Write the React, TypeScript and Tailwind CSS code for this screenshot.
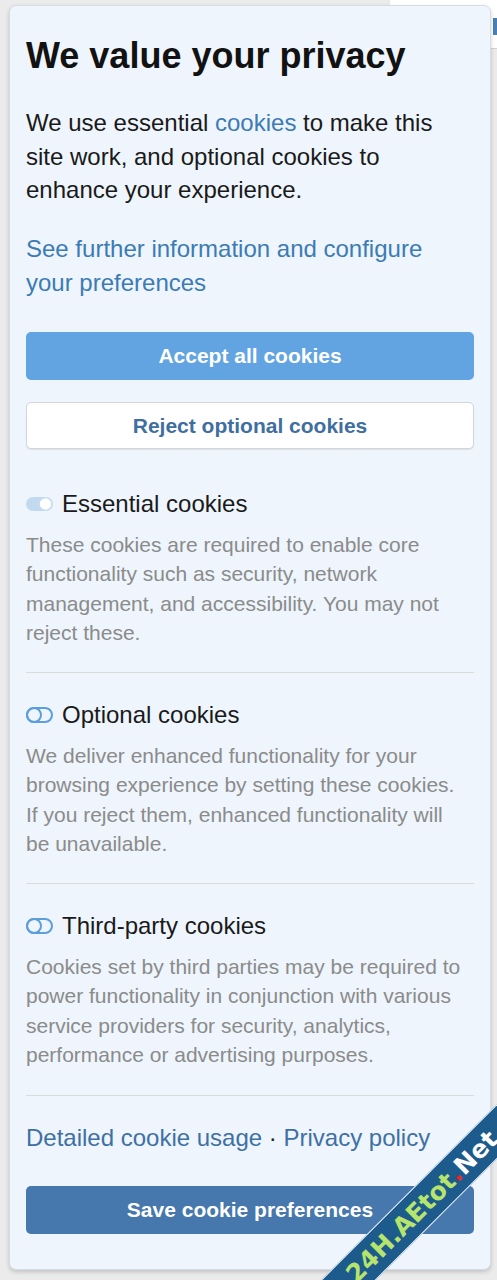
import React from "react";

function ToggleOn() {
  return (
    <svg width="27" height="16" viewBox="0 0 27 16" className="shrink-0">
      <rect x="0" y="1" width="27" height="14" rx="7" fill="#c2daf0" />
      <circle cx="19.5" cy="8" r="5.8" fill="#ffffff" />
    </svg>
  );
}

function ToggleOff() {
  return (
    <svg width="27" height="16" viewBox="0 0 27 16" className="shrink-0">
      <rect x="1" y="1" width="25" height="14" rx="7" fill="none" stroke="#5c9edb" strokeWidth="2" />
      <circle cx="8" cy="8" r="7" fill="none" stroke="#5c9edb" strokeWidth="2" />
    </svg>
  );
}

function Section({
  title,
  on,
  text,
  first,
}: {
  title: string;
  on: boolean;
  text: string;
  first?: boolean;
}) {
  return (
    <div
      className={
        first
          ? "mt-[38px] border-b border-[#d9dadb] pb-[25px]"
          : "border-b border-[#d9dadb] pt-[25px] pb-[25px]"
      }
    >
      <div className="flex items-center gap-[9px]">
        {on ? <ToggleOn /> : <ToggleOff />}
        <span className="text-[24px] leading-[1.4] text-[#1a1a1a]">{title}</span>
      </div>
      <p className="mt-[9px] max-w-[436px] text-[21px] leading-[1.4] text-[#8b8b8b]">{text}</p>
    </div>
  );
}

export default function App() {
  return (
    <div
      className="relative h-[1280px] w-full overflow-hidden bg-[#ebebeb]"
      style={{ fontFamily: '"Liberation Sans", Arial, Helvetica, sans-serif' }}
    >
      {/* background element behind panel, top right */}
      <div className="absolute left-[390px] top-0 h-[49px] w-[107px] border-b border-[#d2d2d2] bg-white">
        <div className="absolute right-0 top-[18px] h-[17px] w-[4px] bg-[#4a7fb5]" />
      </div>

      <div className="relative z-10 ml-[9px] mt-[5px] w-[482px] rounded-[7px] border border-[#d8dde3] bg-[#eef5fc] px-[16px] pt-[28px] pb-[35px] shadow-[0_2px_4px_rgba(0,0,0,0.18)]">
        <h1 className="text-[36px] font-bold leading-[1.2] text-[#121212]">We value your privacy</h1>
        <p className="mt-[29px] text-[24px] leading-[1.4] text-[#1a1a1a]">
          We use essential <span className="text-[#3c7bb5]">cookies</span> to make this site work, and
          optional cookies to enhance your experience.
        </p>
        <p className="mt-[25px] text-[24px] leading-[1.4] text-[#3c7bb5]">
          See further information and configure your preferences
        </p>
        <button className="mt-[33px] flex h-[48px] w-full items-center justify-center rounded-[5px] bg-[#62a4e1] text-[21px] font-bold text-white">
          Accept all cookies
        </button>
        <button className="mt-[22px] flex h-[47px] w-full items-center justify-center rounded-[5px] border border-[#d3d5d8] bg-white text-[21px] font-bold text-[#3f6fa1] shadow-[0_1px_1px_rgba(0,0,0,0.08)]">
          Reject optional cookies
        </button>

        <Section
          first
          on
          title="Essential cookies"
          text="These cookies are required to enable core functionality such as security, network management, and accessibility. You may not reject these."
        />
        <Section
          on={false}
          title="Optional cookies"
          text="We deliver enhanced functionality for your browsing experience by setting these cookies. If you reject them, enhanced functionality will be unavailable."
        />
        <Section
          on={false}
          title="Third-party cookies"
          text="Cookies set by third parties may be required to power functionality in conjunction with various service providers for security, analytics, performance or advertising purposes."
        />

        <p className="pt-[25px] text-[24px] leading-[1.4] text-[#3f70a4]">
          Detailed cookie usage <span className="text-[#222]">·</span> Privacy policy
        </p>
        <button className="mt-[32px] flex h-[48px] w-full items-center justify-center rounded-[5px] bg-[#4677ad] text-[21px] font-bold text-white">
          Save cookie preferences
        </button>
      </div>

      {/* watermark ribbon */}
      <div className="absolute left-[122px] top-[1187px] z-20 flex h-[39px] w-[600px] -rotate-45 items-center justify-center border-y border-white bg-[#1d5b8c]">
        <span
          className="text-[25px] font-bold leading-none text-[#b7e46c]"
          style={{ fontFamily: '"DejaVu Sans", sans-serif' }}
        >
          24H.AEtot<span className="text-[#e5262b]">.</span>
          <span className="text-white">Net</span>
        </span>
      </div>
    </div>
  );
}
